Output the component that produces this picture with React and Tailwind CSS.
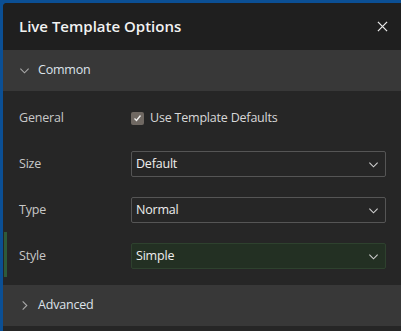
import React from 'react';

const Chevron = ({ dir = 'down', className = '' }) => (
  <svg width="11" height="11" viewBox="0 0 12 12" className={className} fill="none" stroke="currentColor" strokeWidth="1.2">
    {dir === 'down' ? <path d="M1.5 4l4.5 4.5L10.5 4" /> : <path d="M4 1.5l4.5 4.5L4 10.5" />}
  </svg>
);

const Select = ({ value, accent }) => (
  <div
    className={`flex items-center justify-between h-[26px] pl-[4px] pr-[6px] border rounded-[2px] ${
      accent ? 'bg-[#233023] border-[#2e412e]' : 'bg-[#262626] border-[#555555]'
    }`}
  >
    <span className="text-[12.5px] tracking-[-0.2px] text-[#eeeeee]">{value}</span>
    <Chevron className="text-[#cfcfcf]" />
  </div>
);

const Row = ({ label, accent, children }) => (
  <div className="flex items-center h-[46px] relative">
    {accent && <div className="absolute left-[1px] top-[-1px] h-[45px] w-[3px] bg-[#2e5a3a]" />}
    <div className="w-[128px] pl-[16px] text-[12.5px] tracking-[-0.2px] text-[#c8c8c8]">{label}</div>
    <div className="flex-1 pr-[15px]">{children}</div>
  </div>
);

export default function App() {
  return (
    <div className="w-[401px] h-[331px] bg-[#0b4f94] pl-[3px] pt-[3px] overflow-hidden" style={{ fontFamily: '"Open Sans", "Noto Sans", sans-serif' }}>
      <div className="h-full bg-[#262626] rounded-tl-[4px] overflow-hidden">
        {/* header */}
        <div className="h-[47px] bg-[#1f1f1f] flex items-center justify-between pl-[16px] pr-[13px]">
          <h1 className="text-[15px] font-semibold text-[#f2f2f2]">Live Template Options</h1>
          <svg width="11" height="11" viewBox="0 0 12 12" stroke="#e6e6e6" strokeWidth="1.4">
            <path d="M1 1l10 10M11 1L1 11" />
          </svg>
        </div>

        {/* common */}
        <div className="h-[41px] bg-[#383838] flex items-center pl-[16px] gap-[8px]">
          <Chevron className="text-[#a8a8a8]" />
          <span className="text-[12.5px] tracking-[-0.2px] text-[#dde3ea]">Common</span>
        </div>

        <div className="pt-[4px]">
          <Row label="General">
            <label className="flex items-center gap-[6px]">
              <span className="w-[13px] h-[13px] rounded-[2px] bg-[#6f6862] flex items-center justify-center">
                <svg width="9" height="9" viewBox="0 0 9 9" fill="none" stroke="#f0f0f0" strokeWidth="1.3">
                  <path d="M1.5 4.5l2 2 4-5" />
                </svg>
              </span>
              <span className="text-[12.5px] tracking-[-0.2px] text-[#d8d8d8]">Use Template Defaults</span>
            </label>
          </Row>
          <Row label="Size"><Select value="Default" /></Row>
          <Row label="Type"><Select value="Normal" /></Row>
          <Row label="Style" accent><Select value="Simple" accent /></Row>
        </div>

        {/* advanced */}
        <div className="mt-[6px] h-[41px] bg-[#383838] flex items-center pl-[16px] gap-[8px]">
          <Chevron dir="right" className="text-[#a8a8a8]" />
          <span className="text-[12.5px] tracking-[-0.2px] text-[#dde3ea]">Advanced</span>
        </div>
      </div>
    </div>
  );
}
